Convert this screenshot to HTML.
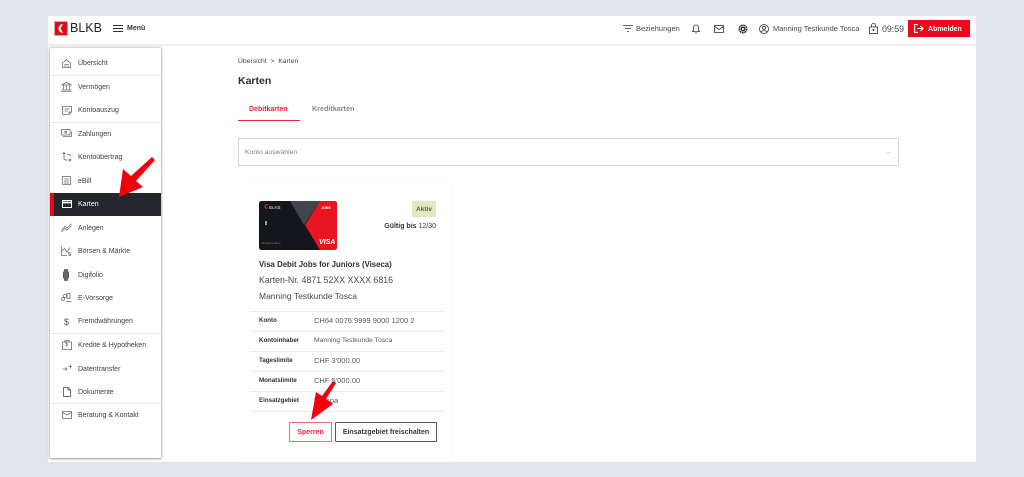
<!DOCTYPE html>
<html><head><meta charset="utf-8"><style>
html,body{margin:0;padding:0;background:#dfe6e9;}
#w{width:1024px;height:477px;background:#dfe6e9;position:relative;overflow:hidden;font-family:"Liberation Sans",sans-serif;color:#33373b;filter:blur(.3px);}
.a{position:absolute;white-space:nowrap;}
.t{position:absolute;white-space:nowrap;font-size:7px;line-height:10px;color:#3c4044;margin-top:1px;}
.b{font-weight:bold;}
.l{position:absolute;height:1px;background:#e8eaeb;}
svg{position:absolute;overflow:visible;}
svg.i{fill:none;stroke:#6a6e72;stroke-width:.8;}
</style></head><body><div id="w">
<div class="a" style="left:48px;top:16px;width:928px;height:446px;background:#fff"></div>
<div class="a" style="left:48px;top:44px;width:928px;height:2px;background:#eceeef"></div>

<!-- logo -->
<div class="a" style="left:54px;top:21px;width:14px;height:15px;background:#f2a0a5"></div>
<div class="a" style="left:55px;top:22px;width:12px;height:13px;background:#e30a17"></div>
<svg style="left:55px;top:22px" width="12" height="13"><path d="M8 2A4.500 4.500 0 0 0 8 11L5.500 6.500Z" fill="#fff"/></svg>
<div class="a" style="left:70px;top:20px;font-size:12.500px;line-height:17px;color:#222">BLKB</div>
<svg class="i" style="left:113px;top:25px;stroke:#333;stroke-width:1" width="10" height="8"><path d="M0 .5H10M0 3.500H10M0 6.500H10"/></svg>
<div class="t b" style="left:127px;top:23px;color:#333;margin-top:1px">Menü</div>

<!-- top right -->
<svg class="i" style="left:623px;top:25px;stroke:#333" width="10" height="8"><path d="M0 .5H10M2 3.500H8M4 6.500H6"/></svg>
<div class="t" style="left:636px;top:23px;font-size:7.500px;color:#45494d">Beziehungen</div>
<svg class="i" style="left:692px;top:24px;stroke:#333" width="8" height="10"><path d="M.5 7.500H7.500L6.500 6V3.500A2.500 2.500 0 0 0 1.500 3.500V6ZM3 9H5"/></svg>
<svg class="i" style="left:714px;top:25px;stroke:#333" width="10" height="8"><rect x=".5" y=".5" width="9" height="7"/><path d="M.5 1.500L5 4.500L9.500 1.500"/></svg>
<svg class="i" style="left:738px;top:24px;stroke:#333;stroke-width:1.500" width="10" height="10"><circle cx="5" cy="5" r="1.800"/><circle cx="5" cy="5" r="3.800" stroke-dasharray="2 .6"/></svg>
<svg class="i" style="left:759px;top:24px;stroke:#333" width="10" height="10"><circle cx="5" cy="5" r="4.500"/><circle cx="5" cy="3.800" r="1.600"/><path d="M2 8C3 6.200 7 6.200 8 8"/></svg>
<div class="t" style="left:773px;top:23px;font-size:7.500px;color:#45494d">Manning Testkunde Tosca</div>
<svg class="i" style="left:869px;top:23px;stroke:#333" width="9" height="11"><rect x=".5" y="4" width="8" height="6.500"/><path d="M2.500 4V2.500A2 2 0 0 1 6.500 2.500V4"/><circle cx="4.500" cy="7" r=".6" fill="#333"/></svg>
<div class="t" style="left:882px;top:23px;font-size:8.800px;color:#45494d">09:59</div>
<div class="a" style="left:908px;top:20px;width:62px;height:17px;background:#f1061c"></div>
<svg style="left:914px;top:24px" width="10" height="9" fill="none" stroke="#fff" stroke-width="1.100"><path d="M4 .6H.6V8.400H4M3 4.500H9M6.500 2L9 4.500L6.500 7"/></svg>
<div class="t b" style="left:928px;top:24px;color:#fff">Abmelden</div>

<!-- sidebar -->
<div class="a" style="left:50px;top:48px;width:111px;height:410px;background:#fff;box-shadow:0 0 2px 1px rgba(0,0,0,.2),0 1px 2px rgba(0,0,0,.22);border-radius:1px"></div>
<div class="l" style="left:50px;top:75px;width:111px"></div>
<div class="l" style="left:50px;top:122px;width:111px"></div>
<div class="l" style="left:50px;top:333px;width:111px"></div>
<div class="l" style="left:50px;top:403px;width:111px"></div>
<div class="a" style="left:50px;top:193px;width:111px;height:23px;background:#23262c"></div>
<div class="a" style="left:50px;top:193px;width:4px;height:23px;background:#e8061c"></div>

<svg class="i" style="left:62px;top:59px" width="9" height="9"><path d="M.5 4L4.500 .8L8.500 4V8.500H.5ZM3 8.500V5.500H6V8.500"/></svg>
<div class="t" style="left:78px;top:58px">Übersicht</div>
<svg class="i" style="left:61px;top:82px" width="11" height="10"><path d="M.5 3L5.500 .5L10.500 3ZM2.500 3.500V7.500M5.500 3.500V7.500M8.500 3.500V7.500M.5 8H10.500M.5 9.500H10.500"/></svg>
<div class="t" style="left:78px;top:82px">Vermögen</div>
<svg class="i" style="left:62px;top:106px" width="10" height="9"><path d="M.5 .5H9.500V6L7 8.500H.5ZM2.500 3H7.500M2.500 5H6M7 8.500V6H9.500"/></svg>
<div class="t" style="left:78px;top:105px">Kontoauszug</div>
<svg class="i" style="left:61px;top:129px" width="11" height="9"><rect x=".5" y=".5" width="8.500" height="5.500"/><path d="M2 7.500H10.500V2.500"/><circle cx="4.700" cy="3.200" r="1"/></svg>
<div class="t" style="left:78px;top:129px">Zahlungen</div>
<svg class="i" style="left:62px;top:152px" width="10" height="11"><path d="M2 .5V6.500A2 2 0 0 0 4 8H9M.5 2L2 .5L3.500 2M7.500 6.500L9 8L7.500 9.500M8 4.500V2.500H5"/></svg>
<div class="t" style="left:78px;top:152px">Kontoübertrag</div>
<svg class="i" style="left:62px;top:176px" width="9" height="9"><rect x=".5" y=".5" width="8" height="8"/><path d="M2 3H7M2 5H7M2 7H7" stroke-width=".7"/></svg>
<div class="t" style="left:78px;top:176px">eBill</div>
<svg style="left:62px;top:200px" width="10" height="8" fill="none" stroke="#fff" stroke-width="1"><rect x=".5" y=".5" width="9" height="7"/><path d="M.5 2.500H9.500" stroke-width="1.800"/></svg>
<div class="t" style="left:78px;top:199px;color:#fff">Karten</div>
<svg class="i" style="left:61px;top:223px" width="11" height="9"><path d="M.5 7L4 3.500L6 5L10.500 .8M.5 8.800L4 5.500L6 7L10.500 3"/></svg>
<div class="t" style="left:78px;top:223px">Anlegen</div>
<svg class="i" style="left:61px;top:246px" width="11" height="11"><path d="M.5 .5V9.500H6M.5 5L3.500 2.500L6 6L9 1.500"/><path d="M9.500 6.500H7.500V8H9.500V9.500H7.500"/></svg>
<div class="t" style="left:78px;top:246px">Börsen &amp; Märkte</div>
<div class="a" style="left:63px;top:271px;width:6px;height:8px;background:#555;border-radius:2px"></div>
<div class="a" style="left:64px;top:269px;width:4px;height:12px;background:#666;border-radius:1px"></div>
<div class="t" style="left:78px;top:270px">Digifolio</div>
<svg class="i" style="left:61px;top:293px" width="11" height="10"><circle cx="2" cy="6" r="1.500"/><circle cx="4" cy="3" r="1.500"/><rect x="6" y=".5" width="3" height="5"/><path d="M5 8.500H10.500"/></svg>
<div class="t" style="left:78px;top:293px">E-Vorsorge</div>
<div class="t" style="left:64px;top:316px;font-size:9px;color:#555">$</div>
<div class="t" style="left:78px;top:316px">Fremdwährungen</div>
<svg class="i" style="left:62px;top:340px" width="10" height="10"><path d="M.5 2H9.500V9.500H.5ZM2 2L3 .5H7L8 2"/></svg>
<div class="a" style="left:65px;top:342px;font-size:6px;line-height:7px;color:#555">$</div>
<div class="t" style="left:78px;top:340px">Kredite &amp; Hypotheken</div>
<svg class="i" style="left:62px;top:364px" width="10" height="9"><path d="M.5 5H5M3.500 3.500L5 5L3.500 6.500M6.500 2.500H10M8.500 .5V4.500"/></svg>
<div class="t" style="left:78px;top:364px">Datentransfer</div>
<svg class="i" style="left:63px;top:387px;stroke-width:1" width="8" height="10"><path d="M.5 .5H5L7.500 3V9.500H.5ZM5 .5V3H7.500"/></svg>
<div class="t" style="left:78px;top:387px">Dokumente</div>
<svg class="i" style="left:62px;top:411px" width="10" height="8"><rect x=".5" y=".5" width="9" height="7"/><path d="M.5 1.500L5 4L9.500 1.500"/></svg>
<div class="t" style="left:78px;top:410px">Beratung &amp; Kontakt</div>

<!-- content -->
<div class="t" style="left:238px;top:56px;color:#45494d;font-size:6.800px">Übersicht &nbsp;&gt;&nbsp; Karten</div>
<div class="a b" style="left:238px;top:74px;font-size:10.500px;line-height:14px;color:#2c2f33">Karten</div>
<div class="t b" style="left:249px;top:103px;color:#e8253a;margin-top:2px">Debitkarten</div>
<div class="t b" style="left:312px;top:103px;font-size:7.200px;color:#85898c">Kreditkarten</div>
<div class="a" style="left:238px;top:120px;width:62px;height:1px;background:#e8253a"></div>
<div class="a" style="left:238px;top:138px;width:659px;height:26px;border:1px solid #d2d4d6;border-radius:1px;background:#fff"></div>
<div class="t" style="left:245px;top:147px;color:#7d8185;font-size:6.800px">Konto auswählen</div>
<div class="a" style="left:887px;top:152px;width:3px;height:1px;background:#d5d7d9"></div>

<!-- card -->
<div class="a" style="left:243px;top:180px;width:209px;height:278px;background:#fff;box-shadow:0 0 2px rgba(0,0,0,.05)"></div>
<svg style="left:259px;top:201px" width="78" height="49">
<defs><clipPath id="c"><rect width="78" height="49" rx="2.500"/></clipPath></defs>
<g clip-path="url(#c)">
<rect width="78" height="49" fill="#13171b"/>
<path d="M61 0H78V49H61L46 24Z" fill="#e8141f"/>
<path d="M31 0H61L45 24Z" fill="#40464c"/>
<path d="M7 3H9L6.500 5.500L9 8H7L5 5.500Z" fill="#e8141f"/>
<rect x="6" y="20" width="2" height="4" fill="#999"/>
</g>
<text x="10" y="8" font-family="Liberation Sans" font-size="4.500" fill="#ddd">BLKB</text>
<text x="62" y="8" font-family="Liberation Sans" font-size="3.500" font-weight="bold" fill="#fff">JOBS</text>
<text x="3" y="43" font-family="Liberation Sans" font-size="2.500" fill="#888">Firstname Name</text>
<text x="60" y="43" font-family="Liberation Sans" font-size="7" font-weight="bold" font-style="italic" fill="#fff">VISA</text>
</svg>
<div class="a" style="left:412px;top:201px;width:24px;height:16px;background:#e3e8c3;border-radius:1px;text-align:center;font-size:6.500px;line-height:17px;font-weight:bold;color:#5a5f4a">Aktiv</div>
<div class="t" style="right:588px;top:221px"><span class="b" style="color:#33373b">Gültig bis</span> 12/30</div>
<div class="a b" style="left:259px;top:259px;font-size:7.800px;line-height:12px;color:#2c2f33">Visa Debit Jobs for Juniors (Viseca)</div>
<div class="a" style="left:259px;top:274px;font-size:8.800px;line-height:12px;color:#45494d">Karten-Nr. 4871 52XX XXXX 6816</div>
<div class="a" style="left:259px;top:290px;font-size:8.500px;line-height:12px;color:#45494d">Manning Testkunde Tosca</div>
<div class="l" style="left:251px;top:311px;width:193px"></div>
<div class="l" style="left:251px;top:331px;width:193px"></div>
<div class="l" style="left:251px;top:351px;width:193px"></div>
<div class="l" style="left:251px;top:371px;width:193px"></div>
<div class="l" style="left:251px;top:391px;width:193px"></div>
<div class="l" style="left:251px;top:411px;width:193px"></div>
<div class="t b" style="left:259px;top:315px;font-size:6.200px;color:#2c2f33">Konto</div><div class="t" style="left:314px;top:315px;font-size:7.500px;color:#55595d">CH64 0076 9999 9000 1200 2</div>
<div class="t b" style="left:259px;top:335px;font-size:6.200px;color:#2c2f33">Kontoinhaber</div><div class="t" style="left:314px;top:335px;font-size:6.800px;color:#55595d">Manning Testkunde Tosca</div>
<div class="t b" style="left:259px;top:355px;font-size:6.200px;color:#2c2f33">Tageslimite</div><div class="t" style="left:314px;top:355px;font-size:7.500px;color:#55595d">CHF 3'000.00</div>
<div class="t b" style="left:259px;top:375px;font-size:6.200px;color:#2c2f33">Monatslimite</div><div class="t" style="left:314px;top:375px;font-size:7.500px;color:#55595d">CHF 5'000.00</div>
<div class="t b" style="left:259px;top:395px;font-size:6.200px;color:#2c2f33">Einsatzgebiet</div><div class="t" style="left:314px;top:395px;font-size:7.500px;color:#55595d">Europa</div>
<div class="a b" style="left:289px;top:422px;width:41px;height:18px;border:1px solid #ee6a78;text-align:center;font-size:7px;line-height:19px;color:#e8253a;border-radius:1px">Sperren</div>
<div class="a b" style="left:335px;top:422px;width:100px;height:18px;border:1px solid #55595d;text-align:center;font-size:7px;line-height:19px;color:#33373b;border-radius:1px">Einsatzgebiet freischalten</div>

<!-- arrows -->
<svg style="left:0;top:0" width="1024" height="477" fill="#f3000f">
<path d="M152 157L155 160L136 181L143 187L119 197L123 169L131 176Z"/>
<path d="M333 381L336 383L326 399L333 404L311 420L316 392L322 396Z"/>
</svg>
</div></body></html>
